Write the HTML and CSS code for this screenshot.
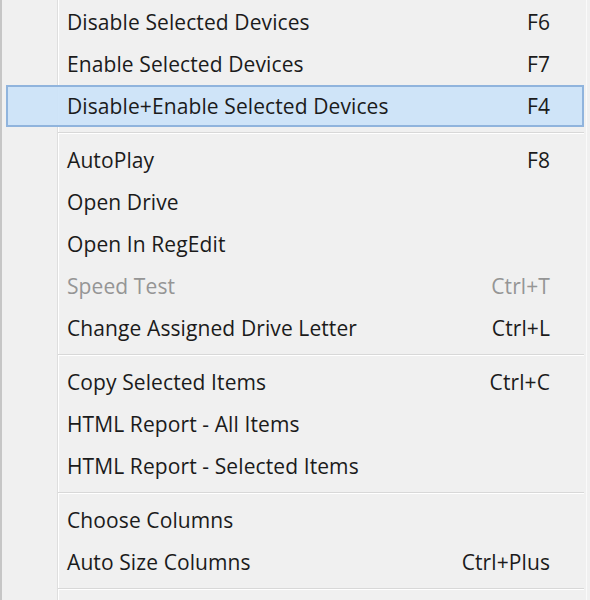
FILE: index.html
```html
<!DOCTYPE html>
<html lang="en">
  <head>
    <meta charset="UTF-8" />
    <title>Device Menu</title>
    <link rel="stylesheet" href="styles.css">
  </head>
  <body>
    <div class="menu">
      <div class="item"><span class="label">Disable Selected Devices</span><span class="key">F6</span></div>
      <div class="item"><span class="label">Enable Selected Devices</span><span class="key">F7</span></div>
      <div class="item active"><span class="label">Disable+Enable Selected Devices</span><span class="key">F4</span></div>
      <div class="sep"></div>
      <div class="item"><span class="label">AutoPlay</span><span class="key">F8</span></div>
      <div class="item"><span class="label">Open Drive</span></div>
      <div class="item"><span class="label">Open In RegEdit</span></div>
      <div class="item disabled"><span class="label">Speed Test</span><span class="key">Ctrl+T</span></div>
      <div class="item"><span class="label">Change Assigned Drive Letter</span><span class="key">Ctrl+L</span></div>
      <div class="sep"></div>
      <div class="item"><span class="label">Copy Selected Items</span><span class="key">Ctrl+C</span></div>
      <div class="item"><span class="label">HTML Report - All Items</span></div>
      <div class="item"><span class="label">HTML Report - Selected Items</span></div>
      <div class="sep"></div>
      <div class="item"><span class="label">Choose Columns</span></div>
      <div class="item"><span class="label">Auto Size Columns</span><span class="key">Ctrl+Plus</span></div>
      <div class="sep"></div>
    </div>
  </body>
</html>
```

FILE: styles.css
```css
* {
  box-sizing: border-box;
}

body {
  margin: 0;
  background: #f0f0f0;
  font-family: "Open Sans", "Noto Sans", sans-serif;
  font-size: 21px;
  letter-spacing: 0.1px;
  color: #1b1b1b;
}

.menu {
  width: 587px;
  height: 600px;
  padding-top: 1px;
  border-left: 2px solid #c6c6c6;
  border-right: 1px solid #fafafa;
  background: linear-gradient(
    to right,
    transparent 55px,
    #dedede 55px,
    #dedede 56px,
    #ffffff 56px,
    #ffffff 57px,
    transparent 57px
  );
}

.item {
  display: flex;
  align-items: center;
  justify-content: space-between;
  height: 42px;
  margin: 0 2px 0 4px;
  padding: 0 32px 0 59px;
  border: 2px solid transparent;
  white-space: nowrap;
}

.item.active {
  background: rgba(204, 227, 248, 0.92);
  border-color: #90b4dd;
}

.item.disabled {
  color: #959595;
}

.sep {
  margin: 5px 2px 5px 56px;
  border-top: 1px solid #d8d8d8;
  border-bottom: 1px solid #ffffff;
}
```
